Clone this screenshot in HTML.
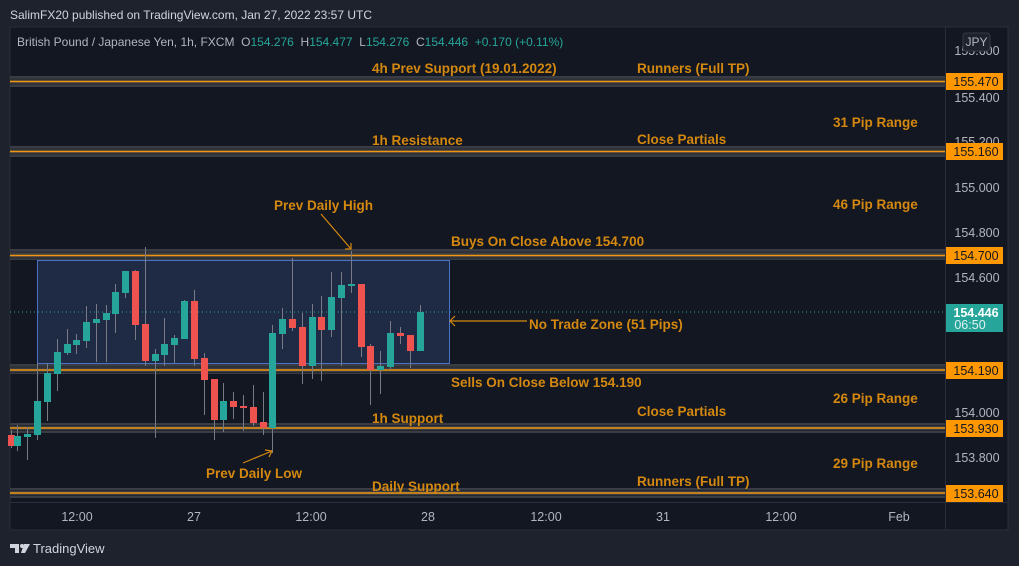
<!DOCTYPE html>
<html><head><meta charset="utf-8"><style>
html,body{margin:0;padding:0;background:#1e222d;width:1019px;height:566px;overflow:hidden;font-family:"Liberation Sans",sans-serif}
</style></head><body>
<svg width="1019" height="566" xmlns="http://www.w3.org/2000/svg" font-family="Liberation Sans, sans-serif">
<rect width="1019" height="566" fill="#1e222d"/>
<text x="10" y="19" font-size="12" fill="#d1d4dc">SalimFX20 published on TradingView.com, Jan 27, 2022 23:57 UTC</text>
<rect x="10" y="27" width="998" height="503" fill="#131722" stroke="#2a2e39"/>
<line x1="945.5" y1="27" x2="945.5" y2="530" stroke="#2a2e39"/>
<line x1="10" y1="502.5" x2="1008" y2="502.5" stroke="#2a2e39"/>
<text x="17" y="46" font-size="12" fill="#b2b5be" xml:space="preserve">British Pound / Japanese Yen, 1h, FXCM  O<tspan fill="#26a69a">154.276</tspan>  H<tspan fill="#26a69a">154.477</tspan>  L<tspan fill="#26a69a">154.276</tspan>  C<tspan fill="#26a69a">154.446</tspan>  <tspan fill="#26a69a">+0.170 (+0.11%)</tspan></text>

<rect x="37.5" y="260.5" width="412" height="103" fill="#1f2a45" stroke="#4a72c4"/>
<line x1="10" y1="312" x2="945" y2="312" stroke="#26a69a" stroke-dasharray="1,3"/>

<g id="levels">
<rect x="10" y="76" width="935" height="11" fill="#3a3c44"/><line x1="10" y1="81.5" x2="945" y2="81.5" stroke="#f0960e" stroke-width="1.5"/><line x1="10" y1="79" x2="945" y2="79" stroke="#25272f"/><line x1="10" y1="84" x2="945" y2="84" stroke="#25272f"/>
<rect x="10" y="146" width="935" height="11" fill="#3a3c44"/><line x1="10" y1="151.5" x2="945" y2="151.5" stroke="#f0960e" stroke-width="1.5"/><line x1="10" y1="149" x2="945" y2="149" stroke="#25272f"/><line x1="10" y1="154" x2="945" y2="154" stroke="#25272f"/>
<rect x="10" y="249" width="935" height="11" fill="#3a3c44"/><line x1="10" y1="255.5" x2="945" y2="255.5" stroke="#f0960e" stroke-width="1.5"/><line x1="10" y1="252" x2="945" y2="252" stroke="#25272f"/><line x1="10" y1="258" x2="945" y2="258" stroke="#25272f"/>
<rect x="10" y="364" width="935" height="10" fill="#3a3c44"/><line x1="10" y1="370" x2="945" y2="370" stroke="#f0960e" stroke-width="1.5"/><line x1="10" y1="367" x2="945" y2="367" stroke="#25272f"/><line x1="10" y1="372.5" x2="945" y2="372.5" stroke="#25272f"/>
<rect x="10" y="423" width="935" height="10" fill="#3a3c44"/><line x1="10" y1="428" x2="945" y2="428" stroke="#f0960e" stroke-width="1.5"/><line x1="10" y1="425.5" x2="945" y2="425.5" stroke="#25272f"/><line x1="10" y1="430.5" x2="945" y2="430.5" stroke="#25272f"/>
<rect x="10" y="488" width="935" height="10" fill="#3a3c44"/><line x1="10" y1="493" x2="945" y2="493" stroke="#f0960e" stroke-width="1.5"/><line x1="10" y1="490.5" x2="945" y2="490.5" stroke="#25272f"/><line x1="10" y1="495.5" x2="945" y2="495.5" stroke="#25272f"/>
</g>

<g id="candles"></g>

<g fill="#d4880f" font-size="13.5" font-weight="bold">
<text x="372" y="73">4h Prev Support (19.01.2022)</text>
<text x="637" y="73">Runners (Full TP)</text>
<text x="833" y="127">31 Pip Range</text>
<text x="372" y="145">1h Resistance</text>
<text x="637" y="144">Close Partials</text>
<text x="274" y="210">Prev Daily High</text>
<text x="833" y="209">46 Pip Range</text>
<text x="451" y="246">Buys On Close Above 154.700</text>
<text x="529" y="329">No Trade Zone (51 Pips)</text>
<text x="451" y="387">Sells On Close Below 154.190</text>
<text x="833" y="403">26 Pip Range</text>
<text x="637" y="416">Close Partials</text>
<text x="372" y="423">1h Support</text>
<text x="833" y="468">29 Pip Range</text>
<text x="206" y="478">Prev Daily Low</text>
<text x="637" y="486">Runners (Full TP)</text>
<text x="372" y="491">Daily Support</text>
</g>
<g stroke="#d4880f" stroke-width="1.2" fill="none">
<line x1="321" y1="214" x2="351" y2="249"/><polyline points="345,249 351,249 351,243"/>
<line x1="527" y1="321" x2="450" y2="321"/><polyline points="455,316 450,321 455,326"/>
<line x1="243" y1="463" x2="272" y2="451"/><polyline points="265,450 272,451 269,457"/>
</g>

<g font-size="12.5" fill="#b2b5be" text-anchor="middle">
<text x="977" y="55">155.600</text>
<text x="977" y="102">155.400</text>
<text x="977" y="146">155.200</text>
<text x="977" y="192">155.000</text>
<text x="977" y="237">154.800</text>
<text x="977" y="282">154.600</text>
<text x="977" y="417">154.000</text>
<text x="977" y="462">153.800</text>
</g>
<rect x="963" y="33" width="27" height="18" rx="3" fill="#1e222d" stroke="#363a45"/>
<text x="976.5" y="46" font-size="12" fill="#b2b5be" text-anchor="middle">JPY</text>
<g font-size="12.5" fill="#131722" text-anchor="middle">
<rect x="946" y="73" width="57" height="17" fill="#ff9800"/><text x="976" y="86">155.470</text>
<rect x="946" y="143" width="57" height="17" fill="#ff9800"/><text x="976" y="156">155.160</text>
<rect x="946" y="247" width="57" height="17" fill="#ff9800"/><text x="976" y="260">154.700</text>
<rect x="946" y="362" width="57" height="17" fill="#ff9800"/><text x="976" y="375">154.190</text>
<rect x="946" y="420" width="57" height="17" fill="#ff9800"/><text x="976" y="433">153.930</text>
<rect x="946" y="485" width="57" height="17" fill="#ff9800"/><text x="976" y="498">153.640</text>
</g>
<rect x="946" y="304" width="57" height="28" fill="#26a69a"/>
<text x="976" y="317" font-size="12.5" font-weight="bold" fill="#fff" text-anchor="middle">154.446</text>
<text x="970" y="329" font-size="12.5" fill="#e0f2f1" text-anchor="middle">06:50</text>

<g font-size="12.5" fill="#b2b5be" text-anchor="middle">
<text x="77" y="521">12:00</text><text x="194" y="521">27</text><text x="311" y="521">12:00</text><text x="428" y="521">28</text>
<text x="546" y="521">12:00</text><text x="663" y="521">31</text><text x="781" y="521">12:00</text><text x="899" y="521">Feb</text>
</g>

<g fill="#d1d4dc">
<path d="M10 544h9v9h-4v-5h-5z"/><circle cx="22" cy="546" r="2"/><path d="M24 544h6l-5 9h-4z"/>
</g>
<text x="33" y="553" font-size="13" fill="#d1d4dc">TradingView</text>
</svg>
<script>
var d=[[11,'r',435,446,430,448],[17,'g',436,446,425,451],[27,'g',434,437,427,460],[37,'g',401,435,363,440],[47,'g',373,402,363,421],[57,'g',352,374,339,391],[67,'g',344,353,329,355],[76,'g',340,345,334,354],[86,'g',322,341,306,348],[96,'g',319,323,304,362],[106,'g',313,320,305,362],[115,'g',292,314,284,333],[125,'g',271,293,271,298],[135,'r',271,325,270,340],[145,'r',324,361,247,366],[155,'g',354,361,349,438],[164,'g',344,355,318,366],[174,'g',338,345,335,363],[184,'g',301,339,300,339],[194,'r',301,359,290,366],[204,'r',358,380,353,415],[214,'r',379,420,379,440],[223,'g',401,420,383,432],[233,'r',401,407,392,419],[243,'r',406,408,395,431],[253,'r',407,423,385,426],[263,'r',422,428,392,435],[272,'g',333,428,325,453],[282,'g',319,334,308,349],[292,'r',319,328,258,331],[302,'r',327,366,313,384],[312,'g',317,366,304,379],[321,'r',317,330,296,381],[331,'g',297,330,272,337],[341,'g',285,298,272,366],[351,'g',284,286,251,293],[361,'r',284,347,284,357],[370,'r',346,370,344,405],[380,'g',366,370,351,394],[390,'g',333,367,321,370],[400,'r',333,336,327,344],[410,'r',335,351,335,368],[420,'g',312,351,305,351]];
var g=document.getElementById('candles'),s='';
d.forEach(function(c){var col=c[1]=='g'?'#26a69a':'#ef5350';
s+='<line x1="'+(c[0]+0.5)+'" y1="'+c[4]+'" x2="'+(c[0]+0.5)+'" y2="'+c[5]+'" stroke="#787b86"/>';
s+='<rect x="'+(c[0]-3)+'" y="'+c[2]+'" width="7" height="'+Math.max(2,c[3]-c[2])+'" fill="'+col+'"/>';});
g.innerHTML=s;
</script>
</body></html>
